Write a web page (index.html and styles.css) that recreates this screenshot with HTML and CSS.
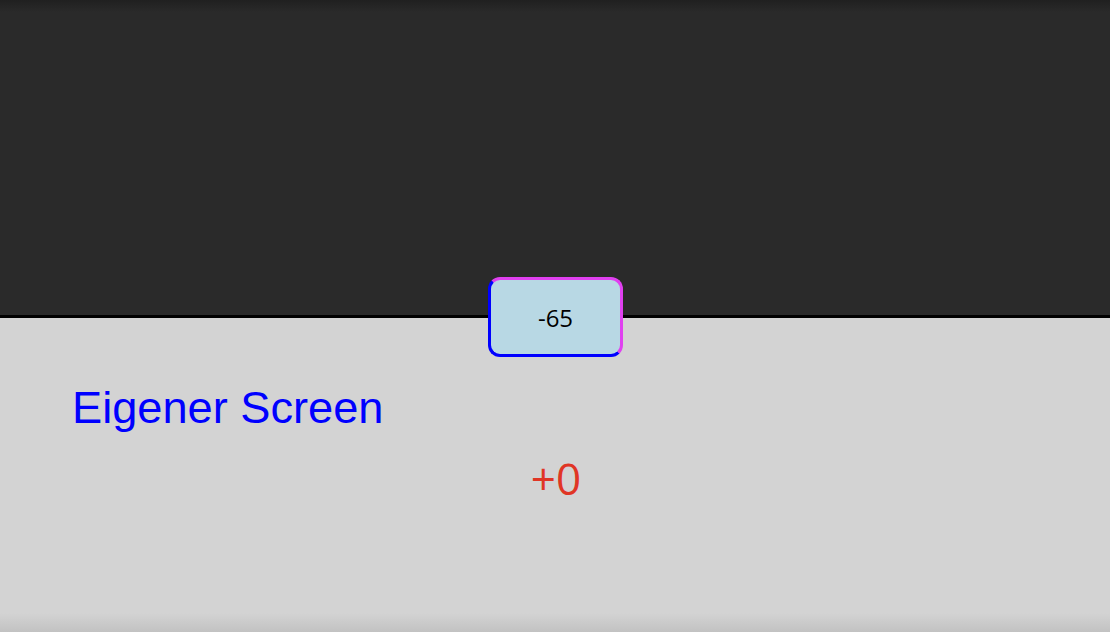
FILE: index.html
```html
<!DOCTYPE html>
<html lang="de">
<head>
<meta charset="utf-8">
<title>Eigener Screen</title>
<link rel="stylesheet" href="styles.css">
</head>
<body>
<div class="app">
  <section class="top"></section>
  <div class="divider">
    <div class="badge">-65</div>
  </div>
  <section class="bottom">
    <div class="title">Eigener Screen</div>
    <div class="delta">+0</div>
  </section>
</div>
</body>
</html>
```
FILE: styles.css
```css
html, body {
  margin: 0;
  padding: 0;
  height: 100%;
}
.app {
  display: flex;
  flex-direction: column;
  height: 632px;
  width: 1110px;
  overflow: hidden;
}
.top {
  height: 315px;
  flex: none;
  background: linear-gradient(to bottom, #202020 0px, #2a2a2a 12px, #2a2a2a 100%);
}
.divider {
  height: 3px;
  flex: none;
  background: #000;
  position: relative;
}
.badge {
  position: absolute;
  left: 488px;
  top: -38px;
  width: 129px;
  height: 74px;
  border: 3px solid;
  border-color: #e040f0 #e040f0 #0000ff #0000ff;
  border-radius: 12px;
  background: #b8d8e4;
  display: flex;
  align-items: center;
  justify-content: center;
  font-family: "Open Sans", "Noto Sans", sans-serif;
  font-size: 24px;
  color: #000;
}
.bottom {
  flex: 1;
  display: flex;
  flex-direction: column;
  padding-top: 64px;
  background: linear-gradient(to bottom, #d3d3d3 0%, #d3d3d3 94%, #c2c2c2 100%);
}
.title {
  font-family: "Liberation Sans", Arial, sans-serif;
  font-size: 45.2px;
  line-height: 52px;
  color: #0000ff;
  padding-left: 72px;
}
.delta {
  margin-top: 14px;
  font-family: "Open Sans", "Noto Sans", sans-serif;
  font-size: 44px;
  line-height: 60px;
  color: #e03525;
  text-align: center;
  padding-left: 2px;
}
```
